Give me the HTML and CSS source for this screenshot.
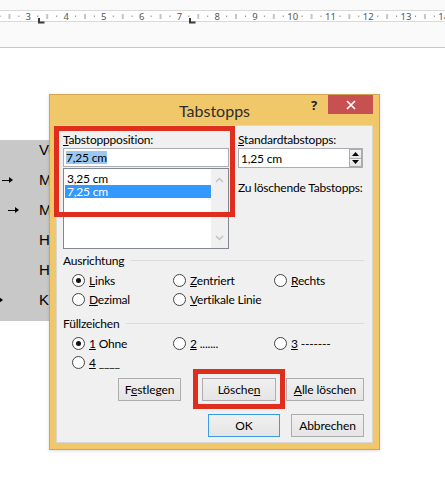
FILE: index.html
```html
<!DOCTYPE html>
<html lang="de">
<head>
    <meta charset="UTF-8">
    <title>Tabstopps</title>
    <link rel="stylesheet" href="styles.css">
</head>
<body>
    <!-- Lineal -->
    <div class="ruler">
        <svg width="445" height="47" viewBox="0 0 445 47">
            <defs>
                <pattern id="ticks" x="28.3" y="0" width="37.77" height="47" patternUnits="userSpaceOnUse">
                    <rect x="9" y="15.5" width="1" height="1.5" fill="#8c8c8c"/>
                    <rect x="18.4" y="14" width="1" height="5" fill="#8c8c8c"/>
                    <rect x="27.8" y="15.5" width="1" height="1.5" fill="#8c8c8c"/>
                </pattern>
            </defs>
            <rect x="-1" y="10.5" width="447" height="11" fill="#fff" stroke="#d9d9d9"/>
            <rect x="0" y="11" width="445" height="10" fill="url(#ticks)"/>
            <g class="ruler-num">
                <text x="28.3" y="19.5">3</text>
                <text x="66.1" y="19.5">4</text>
                <text x="103.8" y="19.5">5</text>
                <text x="141.6" y="19.5">6</text>
                <text x="179.4" y="19.5">7</text>
                <text x="217.2" y="19.5">8</text>
                <text x="254.9" y="19.5">9</text>
                <text x="292.7" y="19.5">10</text>
                <text x="330.5" y="19.5">11</text>
                <text x="368.2" y="19.5">12</text>
                <text x="406" y="19.5">13</text>
                <text x="443.8" y="19.5">14</text>
            </g>
            <path d="M39 18V22.5H44.5" stroke="#3a3a3a" stroke-width="2" fill="none"/>
            <path d="M190 18V22.5H195.5" stroke="#3a3a3a" stroke-width="2" fill="none"/>
        </svg>
    </div>

    <!-- Dokument -->
    <div class="doc">
        <div class="tbl">
            <div class="tbl-row"><span class="lead"></span><span>Vorname</span></div>
            <div class="tbl-row"><span class="lead"><i class="tab" style="margin-left:2px"></i></span><span>Max</span></div>
            <div class="tbl-row"><span class="lead"><i class="tab" style="margin-left:8px"></i></span><span>Muster</span></div>
            <div class="tbl-row"><span class="lead"></span><span>Hauptstr.</span></div>
            <div class="tbl-row"><span class="lead"></span><span>Hamburg</span></div>
            <div class="tbl-row"><span class="lead"><i class="tab" style="margin-left:-8px"></i></span><span>Kunde</span></div>
        </div>
    </div>

    <!-- Dialog -->
    <div class="dlg">
        <div class="dlg-bar">
            <div class="dlg-title">Tabstopps</div>
            <div class="dlg-ctrls">
                <span class="help">?</span>
                <span class="close">
                    <svg width="10" height="10" viewBox="0 0 10 10"><path d="M1 1L9 9M9 1L1 9" stroke="#fff" stroke-width="1.6"/></svg>
                </span>
            </div>
        </div>

        <div class="client">
            <div class="top">
                <div class="col">
                    <div class="lbl"><u>T</u>abstoppposition:</div>
                    <div class="tb"><span class="sel-text">7,25 cm</span></div>
                    <div class="list">
                        <div class="items">
                            <div class="item">3,25 cm</div>
                            <div class="item active">7,25 cm</div>
                        </div>
                        <div class="sbar">
                            <svg width="9" height="6" viewBox="0 0 9 6"><path d="M1 5L4.5 1.5L8 5" stroke="#c2c2c2" stroke-width="1.5" fill="none"/></svg>
                            <svg width="9" height="6" viewBox="0 0 9 6"><path d="M1 1L4.5 4.5L8 1" stroke="#c2c2c2" stroke-width="1.5" fill="none"/></svg>
                        </div>
                    </div>
                </div>
                <div class="col">
                    <div class="lbl"><u>S</u>tandardtabstopps:</div>
                    <div class="tb spin-tb">
                        <span class="tb-val">1,25 cm</span>
                        <span class="spin">
                            <span class="spin-btn"><svg width="7" height="4" viewBox="0 0 7 4"><path d="M0 4L3.5 0L7 4Z" fill="#000"/></svg></span>
                            <span class="spin-btn"><svg width="7" height="4" viewBox="0 0 7 4"><path d="M0 0L3.5 4L7 0Z" fill="#000"/></svg></span>
                        </span>
                    </div>
                    <div class="lbl del-lbl">Zu löschende Tabstopps:</div>
                </div>
            </div>

            <div class="grp">
                <div class="grp-head"><span>Ausrichtung</span><span class="grp-line"></span></div>
                <div class="opts">
                    <label class="opt"><span class="radio on"></span><span><u>L</u>inks</span></label>
                    <label class="opt"><span class="radio"></span><span><u>Z</u>entriert</span></label>
                    <label class="opt"><span class="radio"></span><span><u>R</u>echts</span></label>
                    <label class="opt"><span class="radio"></span><span><u>D</u>ezimal</span></label>
                    <label class="opt wide"><span class="radio"></span><span><u>V</u>ertikale Linie</span></label>
                </div>
            </div>

            <div class="grp grp-fill">
                <div class="grp-head"><span>Füllzeichen</span><span class="grp-line"></span></div>
                <div class="opts">
                    <label class="opt"><span class="radio on"></span><span><u>1</u> Ohne</span></label>
                    <label class="opt"><span class="radio"></span><span><u>2</u> .......</span></label>
                    <label class="opt"><span class="radio"></span><span><u>3</u> -------</span></label>
                    <label class="opt"><span class="radio"></span><span><u>4</u> ____</span></label>
                </div>
            </div>

            <div class="btn-row">
                <button class="btn b-set">F<u>e</u>stlegen</button>
                <button class="btn b-del">Lösche<u>n</u></button>
                <button class="btn b-all"><u>A</u>lle löschen</button>
            </div>
            <div class="btn-row row2">
                <button class="btn b-ok">OK</button>
                <button class="btn b-cancel">Abbrechen</button>
            </div>
        </div>
    </div>

    <!-- Markierungen -->
    <div class="mark mark-pos"></div>
    <div class="mark mark-del"></div>
</body>
</html>
```

FILE: styles.css
```css
body {
    margin: 0;
    background: #fff;
    font-family: Lato, "Noto Sans", sans-serif;
}

/* Lineal */
.ruler {
    height: 47px;
    background: #fafafa;
    border-bottom: 1px solid #c8c8c8;
}

.ruler svg {
    display: block;
}

.ruler-num text {
    font-family: "Noto Sans", sans-serif;
    font-size: 9.5px;
    fill: #555;
    text-anchor: middle;
}

/* Dokument */
.doc {
    padding-top: 92px;
}

.tbl {
    width: 49px;
    overflow: hidden;
    background: #c8c8c8;
    padding-bottom: 1px;
    font-family: "Liberation Sans", Arial, sans-serif;
    font-size: 15px;
    color: #000;
}

.tbl-row {
    display: flex;
    height: 30px;
    line-height: 20px;
    white-space: nowrap;
}

.lead {
    flex: none;
    width: 39px;
    height: 20px;
    display: flex;
    align-items: center;
}

.tab {
    position: relative;
    width: 9px;
    height: 1px;
    background: #000;
    flex: none;
}

.tab::after {
    content: "";
    position: absolute;
    right: -2px;
    top: -3px;
    border-left: 4px solid #000;
    border-top: 3.5px solid transparent;
    border-bottom: 3.5px solid transparent;
}

/* Dialog */
.dlg {
    position: absolute;
    left: 49px;
    top: 94px;
    width: 331px;
    height: 356px;
    box-sizing: border-box;
    background: #f0c86a;
    border: 1px solid #cfa552;
    padding: 0 6px 6px;
    display: flex;
    flex-direction: column;
    font-size: 12px;
    letter-spacing: -0.2px;
    color: #000;
    box-shadow: 0 1px 3px rgba(0, 0, 0, 0.15);
}

.dlg-bar {
    flex: none;
    height: 30px;
    display: grid;
    grid-template-columns: 1fr auto 1fr;
}

.dlg-title {
    grid-column: 2;
    align-self: center;
    font-size: 16px;
    letter-spacing: 0;
    color: #2e2e2e;
    padding-top: 1px;
}

.dlg-ctrls {
    grid-column: 3;
    justify-self: end;
    display: flex;
    align-items: flex-start;
}

.help {
    font-family: "Noto Sans", sans-serif;
    font-weight: bold;
    font-size: 13px;
    line-height: 15px;
    margin: 3px 11px 0 0;
    color: #222;
}

.close {
    width: 45px;
    height: 19px;
    background: #c75050;
    display: flex;
    align-items: center;
    justify-content: center;
}

.close svg {
    display: block;
}

.client {
    flex: 1;
    background: #f0f0f0;
    border: 1px solid #d6d6d6;
    padding: 6px 8px 0 6px;
}

.top {
    display: grid;
    grid-template-columns: 166px 125px;
    column-gap: 9px;
}

.lbl {
    line-height: 15px;
    white-space: nowrap;
}

.tb {
    box-sizing: border-box;
    height: 19px;
    margin-top: 1px;
    background: #fff;
    border: 1px solid #abadb3;
    display: flex;
    align-items: center;
    padding-left: 2px;
    white-space: nowrap;
    line-height: 15px;
}

.sel-text {
    background: #99c9f3;
    line-height: 13px;
}

.spin-tb {
    height: 20px;
    padding-right: 0;
}

.tb-val {
    flex: 1;
}

.spin {
    width: 13px;
    height: 18px;
    display: flex;
    flex-direction: column;
}

.spin-btn {
    flex: 1;
    box-sizing: border-box;
    border: 1px solid #acacac;
    background: linear-gradient(#f2f2f2, #e4e4e4);
    display: flex;
    align-items: center;
    justify-content: center;
}

.spin-btn + .spin-btn {
    border-top: none;
}

.spin-btn svg {
    display: block;
}

.del-lbl {
    margin-top: 12px;
}

.list {
    box-sizing: border-box;
    height: 81px;
    margin-top: 1px;
    background: #fff;
    border: 1px solid #828790;
    display: flex;
}

.items {
    flex: 1;
    padding: 3px 0 0 1px;
}

.item {
    height: 13px;
    line-height: 13px;
    padding-left: 2px;
    white-space: nowrap;
}

.item.active {
    background: #3399ff;
    color: #fff;
}

.sbar {
    width: 17px;
    background: #f0f0f0;
    display: flex;
    flex-direction: column;
    align-items: center;
    justify-content: space-between;
    padding: 8px 0 7px;
    box-sizing: border-box;
}

.sbar svg {
    display: block;
}

/* Gruppen */
.grp {
    margin-top: 4px;
}

.grp-fill {
    margin-top: 7px;
}

.grp-head {
    display: flex;
    align-items: center;
    line-height: 15px;
}

.grp-line {
    flex: 1;
    height: 1px;
    background: #dcdcdc;
    margin: 0 0 0 7px;
}

.opts {
    margin-top: 3px;
    padding-left: 9px;
    display: grid;
    grid-template-columns: 101px 101px 1fr;
}

.opt {
    height: 19px;
    display: flex;
    align-items: center;
    white-space: nowrap;
    line-height: 15px;
}

.radio {
    flex: none;
    box-sizing: border-box;
    width: 13px;
    height: 13px;
    border: 1px solid #444;
    border-radius: 50%;
    background: #fff;
    margin-right: 4px;
    display: flex;
    align-items: center;
    justify-content: center;
}

.radio.on::after {
    content: "";
    width: 5px;
    height: 5px;
    border-radius: 50%;
    background: #111;
}

/* Schaltflaechen */
.btn-row {
    display: flex;
    justify-content: flex-end;
    margin-top: 6px;
}

.btn-row.row2 {
    margin-top: 13px;
}

.btn {
    box-sizing: border-box;
    height: 23px;
    padding: 0;
    border: 1px solid #adadad;
    background: linear-gradient(#f0f0f0, #e5e5e5);
    font-family: Lato, "Noto Sans", sans-serif;
    font-size: 12px;
    letter-spacing: -0.1px;
    color: #000;
}

.b-set { width: 63px; margin-right: 21px; }
.b-del { width: 74px; margin-right: 10px; }
.b-all { width: 78px; }
.b-ok { width: 72px; margin-right: 11px; border-color: #3c9be6; }
.b-cancel { width: 73px; }

/* Rote Markierungen */
.mark {
    position: absolute;
    box-sizing: border-box;
    border: 5px solid #df2e1d;
}

.mark-pos {
    left: 54px;
    top: 126px;
    width: 181px;
    height: 91px;
}

.mark-del {
    left: 193px;
    top: 369px;
    width: 92px;
    height: 40px;
}
```
